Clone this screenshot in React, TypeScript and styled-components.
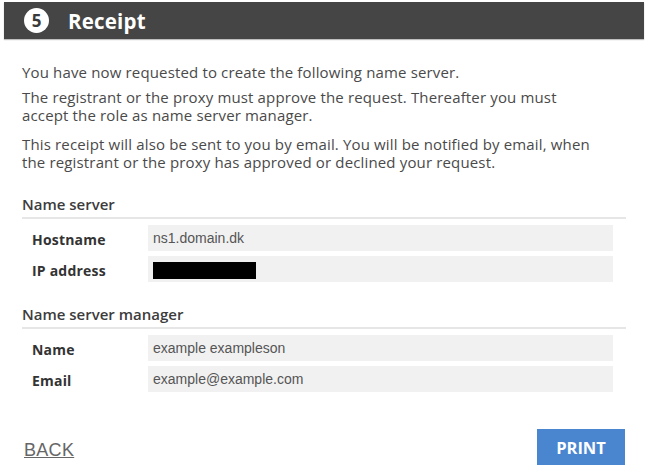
import React from "react";
import styled, { createGlobalStyle } from "styled-components";

const Global = createGlobalStyle`
  html, body { margin: 0; padding: 0; background: #fff; }
  body { font-family: "Open Sans", "Liberation Sans", sans-serif; }
`;

const Page = styled.div`
  width: 650px;
  height: 467px;
  box-sizing: border-box;
  padding-top: 2px;
  display: flex;
  flex-direction: column;
`;

const Header = styled.div`
  margin: 0 6px 0 4px;
  height: 37px;
  background: #454545;
  box-shadow: 0 1px 1px rgba(0, 0, 0, 0.25);
  display: flex;
  align-items: center;
  padding-left: 20px;
  gap: 19px;
`;

const StepBadge = styled.div`
  width: 25px;
  height: 25px;
  border-radius: 50%;
  background: #fff;
  color: #3a3a3a;
  font-family: "Open Sans", sans-serif;
  font-weight: 700;
  font-size: 17px;
  display: flex;
  align-items: center;
  justify-content: center;
`;

const Title = styled.h1`
  margin: 0;
  color: #fff;
  font-family: "Open Sans", sans-serif;
  font-weight: 700;
  font-size: 20.5px;
  letter-spacing: 0.2px;
`;

const Body = styled.div`
  padding: 0 24px 0 22px;
  display: flex;
  flex-direction: column;
  flex: 1;
`;

const Intro = styled.div`
  margin-top: 24px;
  display: flex;
  flex-direction: column;
`;

const Para = styled.p<{ $space?: number }>`
  margin: ${(p) => p.$space ?? 0}px 0 0;
  font-size: 15px;
  letter-spacing: 0.15px;
  line-height: 18px;
  color: #4a4a4a;
`;

const Section = styled.section<{ $top: number }>`
  margin-top: ${(p) => p.$top}px;
`;

const SectionTitle = styled.h2`
  margin: 0;
  font-size: 15px;
  font-weight: 600;
  color: #3c3c3c;
  line-height: 20px;
  padding-bottom: 3px;
  border-bottom: 2px solid #e6e6e6;
`;

const Rows = styled.div`
  margin-top: 6px;
  display: flex;
  flex-direction: column;
  gap: 5px;
  padding-right: 13px;
`;

const Row = styled.div`
  display: grid;
  grid-template-columns: 126px 1fr;
  align-items: center;
`;

const Label = styled.div`
  padding-left: 10px;
  font-size: 14px;
  font-weight: 700;
  letter-spacing: 0.2px;
  color: #333;
  padding-top: 3px;
`;

const Value = styled.div`
  height: 26px;
  background: #f1f1f1;
  display: flex;
  align-items: center;
  padding-left: 5px;
  font-family: "Liberation Sans", Arial, sans-serif;
  font-size: 14px;
  color: #555;
`;

const Redacted = styled.span`
  display: inline-block;
  width: 103px;
  height: 17px;
  background: #000;
  margin-top: 3px;
`;

const Footer = styled.div`
  margin-top: auto;
  margin-bottom: 2px;
  display: flex;
  align-items: center;
  justify-content: space-between;
  padding-right: 1px;
`;

const BackLink = styled.a`
  font-family: "Liberation Sans", Arial, sans-serif;
  font-size: 18px;
  letter-spacing: 0.3px;
  color: #666;
  text-decoration: underline;
  padding-left: 2px;
  padding-top: 6px;
  cursor: pointer;
`;

const PrintButton = styled.button`
  width: 88px;
  height: 36px;
  border: none;
  background: #4a86d0;
  color: #fff;
  font-family: "Open Sans", sans-serif;
  font-weight: 700;
  font-size: 16.5px;
  cursor: pointer;
`;

const rowsNs = [
  { label: "Hostname", value: "ns1.domain.dk" },
  { label: "IP address", value: null },
];

const rowsMgr = [
  { label: "Name", value: "example exampleson" },
  { label: "Email", value: "example@example.com" },
];

export default function App() {
  return (
    <>
      <Global />
      <Page>
        <Header>
          <StepBadge>5</StepBadge>
          <Title>Receipt</Title>
        </Header>
        <Body>
          <Intro>
            <Para>You have now requested to create the following name server.</Para>
            <Para $space={7}>
              The registrant or the proxy must approve the request. Thereafter you must
              <br />
              accept the role as name server manager.
            </Para>
            <Para $space={11}>
              This receipt will also be sent to you by email. You will be notified by email, when
              <br />
              the registrant or the proxy has approved or declined your request.
            </Para>
          </Intro>
          <Section $top={23}>
            <SectionTitle>Name server</SectionTitle>
            <Rows>
              {rowsNs.map((r) => (
                <Row key={r.label}>
                  <Label>{r.label}</Label>
                  <Value>{r.value ?? <Redacted />}</Value>
                </Row>
              ))}
            </Rows>
          </Section>
          <Section $top={22}>
            <SectionTitle>Name server manager</SectionTitle>
            <Rows>
              {rowsMgr.map((r) => (
                <Row key={r.label}>
                  <Label>{r.label}</Label>
                  <Value>{r.value}</Value>
                </Row>
              ))}
            </Rows>
          </Section>
          <Footer>
            <BackLink>BACK</BackLink>
            <PrintButton>PRINT</PrintButton>
          </Footer>
        </Body>
      </Page>
    </>
  );
}
